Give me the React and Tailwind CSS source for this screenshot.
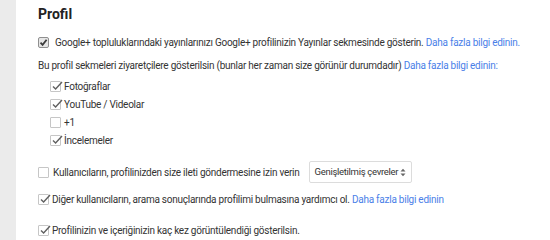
import React from "react";

function NativeCheck() {
  return (
    <span className="inline-flex h-[11px] w-[11px] shrink-0 items-center justify-center rounded-[2px] border border-[#8f8f8f] bg-[#e6e6e6]">
      <svg width="9" height="9" viewBox="0 0 9 9">
        <path d="M1.5 4.6 L3.6 6.8 L7.6 1.8" fill="none" stroke="#3c3c3c" strokeWidth="1.8" />
      </svg>
    </span>
  );
}

function GCheck({ checked }) {
  return (
    <span className="relative inline-block h-[11px] w-[11px] shrink-0 rounded-[1px] border border-[#c6c6c6] bg-white">
      {checked && (
        <svg className="absolute left-[0px] top-[-3px]" width="13" height="13" viewBox="0 0 13 13">
          <path d="M2 7.5 L4.6 10 L11 3" fill="none" stroke="#606060" strokeWidth="1.4" />
        </svg>
      )}
    </span>
  );
}

const link = "text-[#4a80e8]";

export default function App() {
  return (
    <div
      className="flex h-[240px] w-[550px] overflow-hidden bg-white text-[10px] tracking-[-0.25px] text-[#333]"
      style={{ fontFamily: "Roboto, 'Noto Sans', Arial, sans-serif" }}
    >
      <div className="h-full w-[16px] shrink-0 bg-[#ebebeb]" />
      <div className="flex flex-col pl-[22px] pt-[5px]">
        <div className="h-[18px] text-[14px] font-bold leading-[18px] tracking-normal text-[#222]">Profil</div>

        <div className="mt-[12px] flex h-[14px] items-center">
          <NativeCheck />
          <span className="ml-[6px] whitespace-nowrap">
            Google+ topluluklarındaki yayınlarınızı Google+ profilinizin Yayınlar sekmesinde gösterin.{" "}
            <span className={link}>Daha fazla bilgi edinin.</span>
          </span>
        </div>

        <div className="mt-[9px] flex h-[14px] items-center whitespace-nowrap">
          <span>
            Bu profil sekmeleri ziyaretçilere gösterilsin (bunlar her zaman size görünür durumdadır){" "}
            <span className={link}>Daha fazla bilgi edinin:</span>
          </span>
        </div>

        <div className="mt-[5px] flex flex-col pl-[12px]">
          {[
            ["Fotoğraflar", true],
            ["YouTube / Videolar", true],
            ["+1", false],
            ["İncelemeler", true],
          ].map(([label, c]) => (
            <div key={label} className="flex h-[18px] items-center">
              <GCheck checked={c} />
              <span className="ml-[3px]">{label}</span>
            </div>
          ))}
        </div>

        <div className="mt-[11px] flex h-[24px] items-center">
          <GCheck checked={false} />
          <span className="ml-[4px] whitespace-nowrap">
            Kullanıcıların, profilinizden size ileti göndermesine izin verin
          </span>
          <div className="ml-[9px] flex h-[22px] w-[103px] shrink-0 items-center rounded-[2px] border border-[#dcdcdc] bg-white pl-[5px] pr-[5px]">
            <span className="whitespace-nowrap text-[9.5px] tracking-[-0.3px]">Genişletilmiş çevreler</span>
            <svg className="ml-auto shrink-0" width="6" height="9" viewBox="0 0 6 9">
              <path d="M0.5 3.5 L3 0.8 L5.5 3.5 Z M0.5 5.5 L3 8.2 L5.5 5.5 Z" fill="#666" />
            </svg>
          </div>
        </div>

        <div className="mt-[8px] flex h-[14px] items-center whitespace-nowrap">
          <GCheck checked={true} />
          <span className="ml-[3px]">
            Diğer kullanıcıların, arama sonuçlarında profilimi bulmasına yardımcı ol.{" "}
            <span className={link}>Daha fazla bilgi edinin</span>
          </span>
        </div>

        <div className="mt-[17px] flex h-[14px] items-center whitespace-nowrap">
          <GCheck checked={true} />
          <span className="ml-[3px]">
            Profilinizin ve içeriğinizin kaç kez görüntülendiği gösterilsin.
          </span>
        </div>
      </div>
    </div>
  );
}
